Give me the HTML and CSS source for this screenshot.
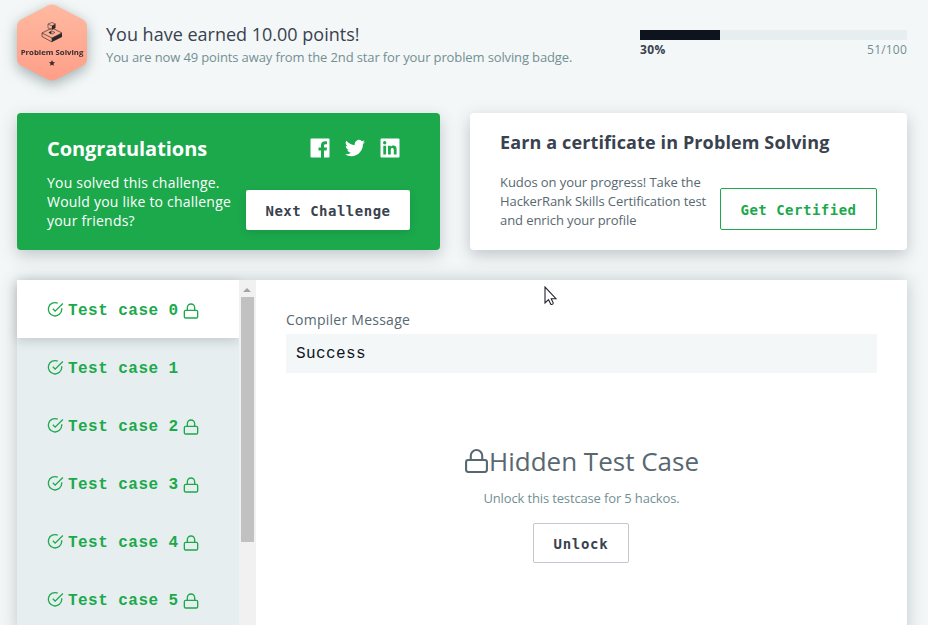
FILE: index.html
```html
<!DOCTYPE html>
<html lang="en">
<head>
<meta charset="utf-8">
<title>Challenge result</title>
<link rel="stylesheet" href="styles.css">
</head>
<body>
<svg class="defs" width="0" height="0" aria-hidden="true">
  <symbol id="check" viewBox="0 0 18 18"><path d="M15.600 7.700v1.100a7.100 7.100 0 1 1-4.200-6.500M16.800 2.600l-8.200 8.100-2.400-2.400" fill="none" stroke="currentColor" stroke-width="1.400"/></symbol>
  <symbol id="lock" viewBox="0 0 24 24"><rect x="2" y="11" width="20" height="11.5" rx="2"/><path d="M6.500 11V7a5.500 5.500 0 0 1 11 0v4"/></symbol>
</svg>
<main class="page">
  <header class="header">
    <div class="badge">
      <svg class="hex" viewBox="0 0 70 78"><defs><linearGradient id="peach" x1="0" y1="0" x2="0" y2="1"><stop offset="0" stop-color="#ffb9a0"/><stop offset="1" stop-color="#ff9e88"/></linearGradient></defs><path d="M31 1.500q4-2 8 0l27 14q4 2.500 4 7v32q0 4.500-4 7l-27 14q-4 2-8 0l-27-14q-4-2.500-4-7v-32q0-4.500 4-7z" fill="url(#peach)"/></svg>
      <div class="badge-body">
        <svg class="blocks" viewBox="0 0 22 21"><path d="M1 11l10-5 10 5-10 5zM1 11v3.500l10 5.500v-4" fill="none" stroke="#4c3b38" stroke-width=".8"/><path d="M11 16l10-5v4l-10 5z" fill="#2a2828"/><path d="M7 2l4-1.500L14.500 2l-3.500 2zM7 2v4l4 2" fill="none" stroke="#5b4540" stroke-width=".7"/><path d="M11 4l3.500-2v4L11 8z M7.500 10.500l3-2v4z" fill="#2a2828"/><path d="M11 9l3 1.500-3 1.500" fill="none" stroke="#4c3b38" stroke-width=".7"/></svg>
        <div class="badge-name">Problem Solving</div>
        <svg class="star" viewBox="0 0 10 10"><path d="M5 0l1.500 3.300 3.500.4-2.600 2.400.7 3.600L5 7.900 1.900 9.700l.7-3.600L0 3.700l3.500-.4z" fill="#3a2d2d"/></svg>
      </div>
    </div>
    <div class="earned">
      <h1>You have earned 10.00 points!</h1>
      <p>You are now 49 points away from the 2nd star for your problem solving badge.</p>
    </div>
    <div class="progress">
      <div class="track"><div class="fill"></div></div>
      <div class="scale"><b>30%</b><span>51/100</span></div>
    </div>
  </header>

  <section class="cards">
    <article class="card congrats">
      <div class="card-head">
        <h2>Congratulations</h2>
        <div class="social">
          <svg viewBox="0 0 20 20"><path fill="#fff" d="M1.500.5h17q1 0 1 1v17q0 1-1 1H14v-7h2.600l.4-3h-3V7.700c0-1 .3-1.500 1.500-1.500H17V3.500c-4-.6-6 .8-6 3.600v2.400H8.500v3H11v7H1.500q-1 0-1-1v-17q0-1 1-1z"/></svg>
          <svg viewBox="0 0 24 24"><path fill="#fff" d="M23.950 4.600a10 10 0 0 1-2.800.8 4.900 4.900 0 0 0 2.160-2.720 10 10 0 0 1-3.120 1.200 4.900 4.900 0 0 0-8.380 4.480A14 14 0 0 1 1.640 3.200a4.900 4.900 0 0 0 1.520 6.570 4.900 4.900 0 0 1-2.220-.6v.06a4.900 4.900 0 0 0 3.940 4.830 5 5 0 0 1-2.200.08 4.900 4.900 0 0 0 4.590 3.420A9.900 9.900 0 0 1 0 19.550a14 14 0 0 0 7.550 2.210c9.050 0 14-7.500 14-14v-.64a10 10 0 0 0 2.400-2.520z"/></svg>
          <svg viewBox="0 0 20 20"><path fill="#fff" fill-rule="evenodd" d="M1.500.5h17q1 0 1 1v17q0 1-1 1h-17q-1 0-1-1v-17q0-1 1-1zM3.300 7.700v8.800h2.800V7.700zM4.700 3.100a1.700 1.700 0 1 0 0 3.400 1.700 1.700 0 0 0 0-3.400zM8 7.700v8.800h2.800v-4.600c0-2.600 3-2.500 3 0v4.600h2.800V11c0-4-4.500-4.300-5.800-2V7.700z"/></svg>
        </div>
      </div>
      <div class="card-body">
        <p>You solved this challenge.<br>Would you like to challenge<br>your friends?</p>
        <button class="btn next">Next Challenge</button>
      </div>
    </article>
    <article class="card certificate">
      <h2>Earn a certificate in Problem Solving</h2>
      <div class="card-body">
        <p>Kudos on your progress! Take the<br>HackerRank Skills Certification test<br>and enrich your profile</p>
        <button class="btn certify">Get Certified</button>
      </div>
    </article>
  </section>

  <section class="results">
    <nav class="cases">
      <a class="case active"><svg class="check"><use href="#check"/></svg><span>Test case 0</span><svg class="lock"><use href="#lock"/></svg></a>
      <a class="case"><svg class="check"><use href="#check"/></svg><span>Test case 1</span></a>
      <a class="case"><svg class="check"><use href="#check"/></svg><span>Test case 2</span><svg class="lock"><use href="#lock"/></svg></a>
      <a class="case"><svg class="check"><use href="#check"/></svg><span>Test case 3</span><svg class="lock"><use href="#lock"/></svg></a>
      <a class="case"><svg class="check"><use href="#check"/></svg><span>Test case 4</span><svg class="lock"><use href="#lock"/></svg></a>
      <a class="case"><svg class="check"><use href="#check"/></svg><span>Test case 5</span><svg class="lock"><use href="#lock"/></svg></a>
    </nav>
    <div class="scrollbar"><div class="arrow"></div><div class="thumb"></div></div>
    <div class="detail">
      <div class="label">Compiler Message</div>
      <pre class="message">Success</pre>
      <div class="hidden-case">
        <h3><svg class="lock"><use href="#lock"/></svg><span>Hidden Test Case</span></h3>
        <p>Unlock this testcase for 5 hackos.</p>
        <button class="btn unlock">Unlock</button>
      </div>
    </div>
  </section>
</main>
<svg class="cursor" viewBox="0 0 13 20"><path d="M1 1v16l3.500-3.300L7 18.500q2 .3 2.300-1.500L7.200 12.700H12z" fill="#fff" stroke="#24202e" stroke-width="1.100"/></svg>
</body>
</html>
```
FILE: styles.css
```css
* { box-sizing: border-box; }
body { margin: 0; height: 625px; overflow: hidden; background: #f3f7f8; color: #39424e; font-family: "Open Sans", "Noto Sans", sans-serif; }
h1, h2, h3, p, pre { margin: 0; }
.defs { position: absolute; }
.page { height: 625px; padding: 0 21px 0 17px; overflow: hidden; }

.header { display: flex; height: 113px; }
.badge { display: grid; width: 70px; height: 78px; margin-top: 4px; filter: drop-shadow(0 4px 7px rgba(40, 60, 60, .4)); }
.hex, .badge-body { grid-area: 1 / 1; }
.hex { width: 70px; height: 78px; }
.badge-body { display: flex; flex-direction: column; align-items: center; padding-top: 18px; }
.blocks { width: 22px; height: 21px; }
.badge-name { margin-top: 4px; font-size: 7.8px; line-height: 10px; font-weight: 700; white-space: nowrap; color: #3a2d2d; }
.star { width: 6px; height: 6px; margin-top: 3px; }
.earned { padding: 22px 0 0 19px; white-space: nowrap; }
.earned h1 { font-size: 18px; line-height: 25px; font-weight: 400; }
.earned p { font-size: 13px; line-height: 20px; letter-spacing: -.125px; color: #738f93; }
.progress { width: 267px; margin-left: auto; padding-top: 30px; }
.track { height: 10px; background: #e7eeef; }
.fill { width: 30%; height: 10px; background: #0e141e; }
.scale { display: flex; justify-content: space-between; padding-top: 1px; font-size: 12px; line-height: 18px; color: #738f93; }
.scale b { color: #39424e; letter-spacing: .4px; }
.scale span { letter-spacing: .2px; }

.cards { display: grid; grid-template-columns: 423px 437px; gap: 30px; height: 167px; }
.card { height: 137px; border-radius: 4px; box-shadow: 0 5px 16px rgba(40, 50, 60, .25); }
.card h2 { font-weight: 700; white-space: nowrap; }
.card-body { display: flex; justify-content: space-between; }
.card p { line-height: 19px; white-space: nowrap; }
.congrats { padding: 22px 30px 0; background: #1ba94c; color: #fff; }
.card-head { display: flex; justify-content: space-between; }
.congrats h2 { font-size: 20px; line-height: 28px; letter-spacing: -.06px; }
.congrats p { padding-top: 10px; font-size: 14px; letter-spacing: .21px; }
.social { display: flex; gap: 15px; padding: 3px 10px 0 0; }
.social svg { width: 20px; height: 20px; }
.btn { border-radius: 2px; background: #fff; padding: 2px 0 0; font: 700 14px "DejaVu Sans Mono", monospace; color: #39424e; white-space: nowrap; }
.next { width: 164px; height: 40px; margin: 27px 0 0; border: 0; box-shadow: 0 3px 8px rgba(0, 0, 0, .1); letter-spacing: .5px; flex-shrink: 0; }
.congrats .card-body { width: 363px; }
.certificate { padding: 17px 30px 0; background: #fff; }
.certificate h2 { font-size: 18px; line-height: 25px; letter-spacing: .12px; }
.certificate p { padding-top: 18px; font-size: 13px; letter-spacing: -.08px; color: #576871; }
.certify { width: 157px; height: 42px; margin-top: 33px; border: 1px solid #1ba94c; color: #1ba94c; letter-spacing: .5px; }

.results { display: flex; width: 890px; height: 355px; background: #fff; box-shadow: 0 0 16px rgba(40, 60, 60, .25); }
.cases { width: 222px; background: #e7eeef; }
.case { display: flex; align-items: center; height: 58px; padding-left: 30px; color: #1ba94c; }
.active { background: #fff; box-shadow: 0 3px 10px rgba(40, 60, 60, .2); }
.case span { width: 115px; padding-top: 3px; font: 700 16px/20px "Liberation Mono", monospace; letter-spacing: .46px; white-space: nowrap; }
.check { width: 17px; height: 17px; margin-right: 4px; }
.lock { fill: none; stroke: currentColor; stroke-width: 2; }
.case .lock { width: 16px; height: 16px; margin-top: 4px; }
.scrollbar { width: 17px; padding-left: 2px; background: #f1f1f1; }
.arrow { width: 0; height: 12px; margin: 0 0 5px 2px; border: 4px solid transparent; border-top-width: 3px; border-bottom-color: #a3a3a3; }
.thumb { width: 13px; height: 245px; background: #c1c1c1; }
.detail { width: 651px; padding: 29px 30px 0; }
.label { font-size: 14px; line-height: 22px; letter-spacing: .25px; color: #576871; }
.message { height: 39px; margin-top: 3px; padding: 0 10px; background: #f3f7f7; color: #0e141e; font: 400 16px/40px "Liberation Mono", monospace; letter-spacing: .4px; }
.hidden-case { display: flex; flex-direction: column; align-items: center; padding-top: 70px; color: #576871; }
.hidden-case h3 { display: flex; align-items: center; font-size: 26px; line-height: 36px; font-weight: 400; white-space: nowrap; }
.hidden-case .lock { width: 25px; height: 26px; }
.hidden-case p { margin-top: 9px; font-size: 13px; line-height: 20px; letter-spacing: -.14px; color: #738f93; }
.unlock { width: 96px; height: 40px; margin: 15px 1px 0 0; border: 1px solid #c2c7d0; letter-spacing: .7px; }
.cursor { position: absolute; left: 544px; top: 286px; width: 13px; height: 20px; }
```
